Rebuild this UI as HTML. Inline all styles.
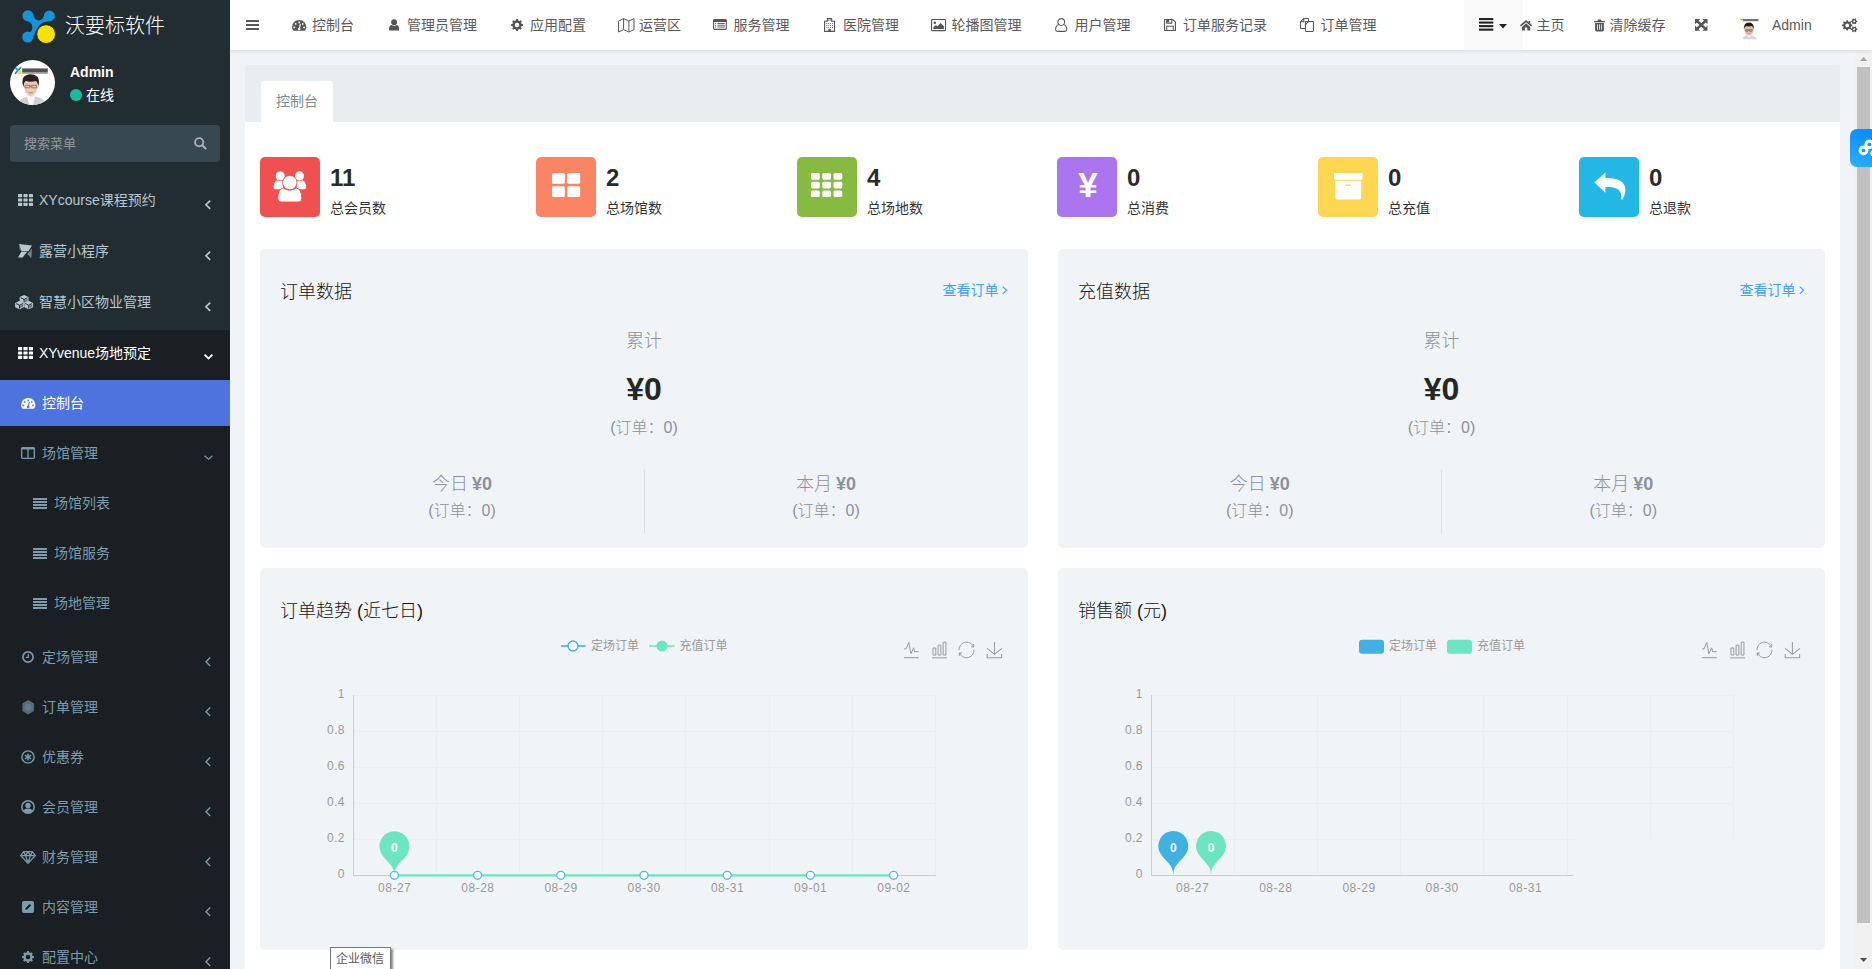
<!DOCTYPE html>
<html lang="zh-CN">
<head>
<meta charset="utf-8">
<title>沃要标软件</title>
<style>
*{box-sizing:border-box;margin:0;padding:0}
html,body{width:1872px;height:969px;overflow:hidden}
body{font-family:"Liberation Sans","Noto Sans CJK SC",sans-serif;font-size:14px;color:#333;background:#f1f4f6;position:relative;-webkit-font-smoothing:antialiased}
.a{position:absolute;white-space:nowrap}
svg{position:absolute;overflow:visible}
#sidebar{position:absolute;left:0;top:0;width:230px;height:969px;background:#222d32;overflow:hidden}
#sidebar .dark{position:absolute;left:0;top:330px;width:230px;height:639px;background:#191f23}
#sidebar .act{position:absolute;left:0;top:380px;width:230px;height:46px;background:#4e73df}
.t{position:absolute;white-space:nowrap;height:20px;line-height:20px;font-size:14px}
.m1{color:#b8c7ce}
.m2{color:#7d9bab}
.w{color:#fff}
#navbar{position:absolute;left:230px;top:0;width:1642px;height:50px;background:#fff;box-shadow:0 1px 4px rgba(0,21,41,.12)}
#navbar .t{color:#595959;top:15px}
.card{position:absolute;background:#f1f4f6;border-radius:5px}
.h{position:absolute;white-space:nowrap;font-size:18px;line-height:26px;height:26px;color:#151515;font-weight:300}
.l{font-weight:300}
b{font-weight:700}
.g{color:#8c919b}
.c{text-align:center}
</style>
</head>
<body>
<div id="main">
<div class="a" style="left:245px;top:65px;width:1595px;height:57px;background:#e8edf0;border-radius:3px 3px 0 0"></div>
<div class="a" style="left:245px;top:122px;width:1595px;height:847px;background:#fff"></div>
<div class="a" style="left:261px;top:81px;width:72px;height:41px;background:#fff;border-radius:3px 3px 0 0"></div>
<div class="a" style="left:276px;top:91px;font-size:14px;line-height:20px;color:#7b8a8b">控制台</div>
<div class="a" style="left:260px;top:157px;width:60px;height:60px;border-radius:5px;background:#f05050"></div><svg style="left:274px;top:170.5px" width="32.5" height="31" viewBox="0 0 32.5 31"><circle cx="6.2" cy="4.9" r="4.6" fill="#fff"/><circle cx="25.5" cy="4.9" r="4.6" fill="#fff"/><path d="M-.4,16.4 Q-.4,9.8 3.6,9.4 Q6.2,10.8 9,9.8 V18.2 H1.4 Q-.4,18.2 -.4,16.4Z" fill="#fff"/><path d="M32.1,16.4 Q32.1,9.8 28.1,9.4 Q25.5,10.8 22.7,9.8 V18.2 H30.3 Q32.1,18.2 32.1,16.4Z" fill="#fff"/><path d="M3.8,27.4 Q3.8,17.8 9.4,17 Q15.8,21.4 22.2,17 Q27.8,17.8 27.8,27.4 Q27.8,31 24.2,31 H7.4 Q3.8,31 3.8,27.4Z" fill="#fff" stroke="#f05050" stroke-width=".9"/><circle cx="15.8" cy="11.6" r="7.2" fill="#fff" stroke="#f05050" stroke-width=".9"/></svg><div class="a" style="left:330px;top:163px;font-size:24px;font-weight:bold;line-height:30px;color:#2b2b2b">11</div><div class="a" style="left:330px;top:198px;font-size:14px;line-height:20px;color:#333">总会员数</div>
<div class="a" style="left:536px;top:157px;width:60px;height:60px;border-radius:5px;background:#fa8564"></div><svg style="left:551.7px;top:173.1px" width="28.2" height="24.1" viewBox="0 0 28.2 24.1"><rect x="0.00" y="0.00" width="12.85" height="10.80" rx="1.6" fill="#fff"/><rect x="0.00" y="13.30" width="12.85" height="10.80" rx="1.6" fill="#fff"/><rect x="15.35" y="0.00" width="12.85" height="10.80" rx="1.6" fill="#fff"/><rect x="15.35" y="13.30" width="12.85" height="10.80" rx="1.6" fill="#fff"/></svg><div class="a" style="left:606px;top:163px;font-size:24px;font-weight:bold;line-height:30px;color:#2b2b2b">2</div><div class="a" style="left:606px;top:198px;font-size:14px;line-height:20px;color:#333">总场馆数</div>
<div class="a" style="left:797px;top:157px;width:60px;height:60px;border-radius:5px;background:#86ba41"></div><svg style="left:811.3px;top:173.1px" width="31.3" height="24.1" viewBox="0 0 31.3 24.1"><rect x="0.00" y="0.00" width="8.77" height="6.70" rx="1.6" fill="#fff"/><rect x="0.00" y="8.70" width="8.77" height="6.70" rx="1.6" fill="#fff"/><rect x="0.00" y="17.40" width="8.77" height="6.70" rx="1.6" fill="#fff"/><rect x="11.27" y="0.00" width="8.77" height="6.70" rx="1.6" fill="#fff"/><rect x="11.27" y="8.70" width="8.77" height="6.70" rx="1.6" fill="#fff"/><rect x="11.27" y="17.40" width="8.77" height="6.70" rx="1.6" fill="#fff"/><rect x="22.53" y="0.00" width="8.77" height="6.70" rx="1.6" fill="#fff"/><rect x="22.53" y="8.70" width="8.77" height="6.70" rx="1.6" fill="#fff"/><rect x="22.53" y="17.40" width="8.77" height="6.70" rx="1.6" fill="#fff"/></svg><div class="a" style="left:867px;top:163px;font-size:24px;font-weight:bold;line-height:30px;color:#2b2b2b">4</div><div class="a" style="left:867px;top:198px;font-size:14px;line-height:20px;color:#333">总场地数</div>
<div class="a" style="left:1057px;top:157px;width:60px;height:60px;border-radius:5px;background:#ac75f0"></div><div class="a c" style="left:1058px;top:164.5px;width:60px;font-size:35px;font-weight:bold;line-height:40px;color:#fff">¥</div><div class="a" style="left:1127px;top:163px;font-size:24px;font-weight:bold;line-height:30px;color:#2b2b2b">0</div><div class="a" style="left:1127px;top:198px;font-size:14px;line-height:20px;color:#333">总消费</div>
<div class="a" style="left:1318px;top:157px;width:60px;height:60px;border-radius:5px;background:#fdd752"></div><svg style="left:1334px;top:173px" width="28.5" height="26.4" viewBox="0 0 28.5 26.4"><rect x="0" y="0" width="28.5" height="6.7" rx="1" fill="#fff"/><path d="M1.4,7.8 H27.1 V25.2 Q27.1,26.4 25.9,26.4 H2.6 Q1.4,26.4 1.4,25.2Z" fill="#fff"/><rect x="11.2" y="11.4" width="6" height="1.6" rx=".8" fill="#fdd752"/></svg><div class="a" style="left:1388px;top:163px;font-size:24px;font-weight:bold;line-height:30px;color:#2b2b2b">0</div><div class="a" style="left:1388px;top:198px;font-size:14px;line-height:20px;color:#333">总充值</div>
<div class="a" style="left:1579px;top:157px;width:60px;height:60px;border-radius:5px;background:#23b7e5"></div><svg style="left:1593.5px;top:171.5px" width="32" height="28" viewBox="0 0 32 28"><path d="M.4,10.4 L11.4,.4 V6 C22.5,6 31.4,8.5 31.4,18 C31.4,21.5 30,25 28.3,27.8 L27.1,27.5 C28.1,18.5 24.5,14.7 11.4,14.7 V20.7Z" fill="#fff"/></svg><div class="a" style="left:1649px;top:163px;font-size:24px;font-weight:bold;line-height:30px;color:#2b2b2b">0</div><div class="a" style="left:1649px;top:198px;font-size:14px;line-height:20px;color:#333">总退款</div>
<div class="card" style="left:260px;top:249px;width:768px;height:299px"></div>
<div class="h" style="left:280px;top:278.5px">订单数据</div><div class="a" style="left:942.5px;top:280px;font-size:14px;line-height:20px;color:#409eff">查看订单</div><svg style="left:1002px;top:285.8px" width="5.5" height="8.5" viewBox="0 0 5.5 8.5"><path d="M.8,.6 L4.6,4.25 L.8,7.9" fill="none" stroke="#409eff" stroke-width="1.2"/></svg>
<div class="a c g l" style="left:544px;top:328px;width:200px;font-size:18px;line-height:26px">累计</div><div class="a c" style="left:544px;top:369px;width:200px;font-size:32px;font-weight:bold;line-height:40px;color:#262626">¥0</div><div class="a c g l" style="left:544px;top:416px;width:200px;font-size:16px;line-height:24px">(订单：0)</div>
<div class="a" style="left:644px;top:470px;width:1px;height:63px;background:#dcdfe4"></div><div class="a c g l" style="left:362px;top:471px;width:200px;font-size:18px;line-height:26px">今日<b style="margin-left:4px">¥0</b></div><div class="a c g l" style="left:362px;top:499px;width:200px;font-size:16px;line-height:24px">(订单：0)</div>
<div class="a c g l" style="left:726px;top:471px;width:200px;font-size:18px;line-height:26px">本月<b style="margin-left:4px">¥0</b></div><div class="a c g l" style="left:726px;top:499px;width:200px;font-size:16px;line-height:24px">(订单：0)</div>
<div class="card" style="left:1058px;top:249px;width:767px;height:299px"></div>
<div class="h" style="left:1078px;top:278.5px">充值数据</div><div class="a" style="left:1739.5px;top:280px;font-size:14px;line-height:20px;color:#409eff">查看订单</div><svg style="left:1799px;top:285.8px" width="5.5" height="8.5" viewBox="0 0 5.5 8.5"><path d="M.8,.6 L4.6,4.25 L.8,7.9" fill="none" stroke="#409eff" stroke-width="1.2"/></svg>
<div class="a c g l" style="left:1341.5px;top:328px;width:200px;font-size:18px;line-height:26px">累计</div><div class="a c" style="left:1341.5px;top:369px;width:200px;font-size:32px;font-weight:bold;line-height:40px;color:#262626">¥0</div><div class="a c g l" style="left:1341.5px;top:416px;width:200px;font-size:16px;line-height:24px">(订单：0)</div>
<div class="a" style="left:1441px;top:470px;width:1px;height:63px;background:#dcdfe4"></div><div class="a c g l" style="left:1159.75px;top:471px;width:200px;font-size:18px;line-height:26px">今日<b style="margin-left:4px">¥0</b></div><div class="a c g l" style="left:1159.75px;top:499px;width:200px;font-size:16px;line-height:24px">(订单：0)</div>
<div class="a c g l" style="left:1523.25px;top:471px;width:200px;font-size:18px;line-height:26px">本月<b style="margin-left:4px">¥0</b></div><div class="a c g l" style="left:1523.25px;top:499px;width:200px;font-size:16px;line-height:24px">(订单：0)</div>
<div class="card" style="left:260px;top:568px;width:768px;height:381.5px"></div>
<div class="h" style="left:280px;top:598px">订单趋势 (近七日)</div>
<svg style="left:904px;top:642px" width="15" height="16" viewBox="4 6 52 53" preserveAspectRatio="none"><path d="M4.1,28.9h7.1l9.3-22l7.4,38l9.7-19.7l3,12.8h14.9M4.1,58h51.4" fill="none" stroke="#999" stroke-width="1" vector-effect="non-scaling-stroke"/></svg><svg style="left:932px;top:642px" width="15" height="16" viewBox="3 1.5 54 57" preserveAspectRatio="none"><path d="M6.7,22.9h10V48h-10V22.9zM24.9,13h10v35h-10V13zM43.2,2h10v46h-10V2zM3.1,58h53.7" fill="none" stroke="#999" stroke-width="1" vector-effect="non-scaling-stroke"/></svg><svg style="left:959px;top:642px" width="15" height="16" viewBox="2 1.5 56 57.5" preserveAspectRatio="none"><path d="M47,18.9h9.8V8.7M56.3,20.1C52.1,9,40.5,0.6,26.8,2.1C12.6,3.7,1.6,16.2,2.1,30.6M13,41.1H3.1v10.2M3.7,39.9c4.2,11.1,15.8,19.5,29.5,18c14.2-1.6,25.2-14.1,24.7-28.5" fill="none" stroke="#999" stroke-width="1" vector-effect="non-scaling-stroke"/></svg><svg style="left:987px;top:642px" width="15" height="16" viewBox="4 0 51 58.5" preserveAspectRatio="none"><path d="M4.7,22.9L29.3,45.5L54.7,23.4M4.6,43.6L4.6,58L53.8,58L53.8,43.6M29.2,45.1L29.2,0" fill="none" stroke="#999" stroke-width="1" vector-effect="non-scaling-stroke"/></svg>
<svg style="left:0;top:0;font-family:'Liberation Sans','Noto Sans CJK SC',sans-serif" width="1872" height="969" viewBox="0 0 1872 969"><path d="M354,839.5 H936" stroke="#eee" stroke-width="1"/><path d="M354,803.5 H936" stroke="#eee" stroke-width="1"/><path d="M354,767.5 H936" stroke="#eee" stroke-width="1"/><path d="M354,731.5 H936" stroke="#eee" stroke-width="1"/><path d="M354,695.5 H936" stroke="#eee" stroke-width="1"/><path d="M436.5,695 V875" stroke="#eee" stroke-width="1"/><path d="M519.5,695 V875" stroke="#eee" stroke-width="1"/><path d="M602.5,695 V875" stroke="#eee" stroke-width="1"/><path d="M685.5,695 V875" stroke="#eee" stroke-width="1"/><path d="M769.5,695 V875" stroke="#eee" stroke-width="1"/><path d="M852.5,695 V875" stroke="#eee" stroke-width="1"/><path d="M935.5,695 V875" stroke="#eee" stroke-width="1"/><path d="M353.5,695 V876" stroke="#ccc" stroke-width="1"/><path d="M353,875.5 H936" stroke="#ccc" stroke-width="1"/><text x="344.85" y="878" text-anchor="end" font-size="12" letter-spacing=".35" fill="#999">0</text><text x="344.85" y="842" text-anchor="end" font-size="12" letter-spacing=".35" fill="#999">0.2</text><text x="344.85" y="806" text-anchor="end" font-size="12" letter-spacing=".35" fill="#999">0.4</text><text x="344.85" y="770" text-anchor="end" font-size="12" letter-spacing=".35" fill="#999">0.6</text><text x="344.85" y="734" text-anchor="end" font-size="12" letter-spacing=".35" fill="#999">0.8</text><text x="344.85" y="698" text-anchor="end" font-size="12" letter-spacing=".35" fill="#999">1</text><text x="394.7" y="892.2" text-anchor="middle" font-size="12" letter-spacing=".5" fill="#999">08-27</text><text x="477.9" y="892.2" text-anchor="middle" font-size="12" letter-spacing=".5" fill="#999">08-28</text><text x="561.0" y="892.2" text-anchor="middle" font-size="12" letter-spacing=".5" fill="#999">08-29</text><text x="644.2" y="892.2" text-anchor="middle" font-size="12" letter-spacing=".5" fill="#999">08-30</text><text x="727.5" y="892.2" text-anchor="middle" font-size="12" letter-spacing=".5" fill="#999">08-31</text><text x="810.7" y="892.2" text-anchor="middle" font-size="12" letter-spacing=".5" fill="#999">09-01</text><text x="893.9" y="892.2" text-anchor="middle" font-size="12" letter-spacing=".5" fill="#999">09-02</text><path d="M561,646.0 H585.5" stroke="#3fb1e3" stroke-width="1.6"/><circle cx="573" cy="646.0" r="5" fill="#fff" stroke="#3fb1e3" stroke-width="1.4"/><text x="591" y="649.6" font-size="12" fill="#999">定场订单</text><path d="M649,646.0 H674.5" stroke="#6be6c1" stroke-width="1.6"/><circle cx="662" cy="646.0" r="5.6" fill="#6be6c1"/><text x="679.5" y="649.6" font-size="12" fill="#999">充值订单</text><path d="M394.4,875.3 H893.6" stroke="#6be6c1" stroke-width="2.3"/><circle cx="394.40" cy="875.3" r="4" fill="#fff" stroke="#52b8e6" stroke-width="1.35"/><circle cx="477.60" cy="875.3" r="4" fill="#fff" stroke="#52b8e6" stroke-width="1.35"/><circle cx="560.80" cy="875.3" r="4" fill="#fff" stroke="#52b8e6" stroke-width="1.35"/><circle cx="644.00" cy="875.3" r="4" fill="#fff" stroke="#52b8e6" stroke-width="1.35"/><circle cx="727.20" cy="875.3" r="4" fill="#fff" stroke="#52b8e6" stroke-width="1.35"/><circle cx="810.40" cy="875.3" r="4" fill="#fff" stroke="#52b8e6" stroke-width="1.35"/><circle cx="893.60" cy="875.3" r="4" fill="#fff" stroke="#52b8e6" stroke-width="1.35"/><path d="M380.85,852.66 A15.00,15.00 0 1 1 407.95,852.66 C404.10,860.79 394.40,864.30 394.40,874.80 C394.40,864.30 384.70,860.79 380.85,852.66Z" fill="#6be6c1"/><text x="394.40" y="851.83" text-anchor="middle" font-size="12" font-weight="bold" fill="#fff">0</text></svg>
<div class="card" style="left:1058px;top:568px;width:767px;height:381.5px"></div>
<div class="h" style="left:1078px;top:598px">销售额 (元)</div>
<svg style="left:1701.5px;top:642px" width="15" height="16" viewBox="4 6 52 53" preserveAspectRatio="none"><path d="M4.1,28.9h7.1l9.3-22l7.4,38l9.7-19.7l3,12.8h14.9M4.1,58h51.4" fill="none" stroke="#999" stroke-width="1" vector-effect="non-scaling-stroke"/></svg><svg style="left:1729.5px;top:642px" width="15" height="16" viewBox="3 1.5 54 57" preserveAspectRatio="none"><path d="M6.7,22.9h10V48h-10V22.9zM24.9,13h10v35h-10V13zM43.2,2h10v46h-10V2zM3.1,58h53.7" fill="none" stroke="#999" stroke-width="1" vector-effect="non-scaling-stroke"/></svg><svg style="left:1756.5px;top:642px" width="15" height="16" viewBox="2 1.5 56 57.5" preserveAspectRatio="none"><path d="M47,18.9h9.8V8.7M56.3,20.1C52.1,9,40.5,0.6,26.8,2.1C12.6,3.7,1.6,16.2,2.1,30.6M13,41.1H3.1v10.2M3.7,39.9c4.2,11.1,15.8,19.5,29.5,18c14.2-1.6,25.2-14.1,24.7-28.5" fill="none" stroke="#999" stroke-width="1" vector-effect="non-scaling-stroke"/></svg><svg style="left:1784.5px;top:642px" width="15" height="16" viewBox="4 0 51 58.5" preserveAspectRatio="none"><path d="M4.7,22.9L29.3,45.5L54.7,23.4M4.6,43.6L4.6,58L53.8,58L53.8,43.6M29.2,45.1L29.2,0" fill="none" stroke="#999" stroke-width="1" vector-effect="non-scaling-stroke"/></svg>
<svg style="left:0;top:0;font-family:'Liberation Sans','Noto Sans CJK SC',sans-serif" width="1872" height="969" viewBox="0 0 1872 969"><path d="M1152,839.5 H1578" stroke="#eee" stroke-width="1"/><path d="M1152,803.5 H1734" stroke="#eee" stroke-width="1"/><path d="M1152,767.5 H1734" stroke="#eee" stroke-width="1"/><path d="M1152,731.5 H1734" stroke="#eee" stroke-width="1"/><path d="M1152,695.5 H1734" stroke="#eee" stroke-width="1"/><path d="M1234.5,695 V875" stroke="#eee" stroke-width="1"/><path d="M1317.5,695 V875" stroke="#eee" stroke-width="1"/><path d="M1400.5,695 V875" stroke="#eee" stroke-width="1"/><path d="M1483.5,695 V875" stroke="#eee" stroke-width="1"/><path d="M1567.5,695 V875" stroke="#eee" stroke-width="1"/><path d="M1650.5,695 V838" stroke="#eee" stroke-width="1"/><path d="M1733.5,695 V838" stroke="#eee" stroke-width="1"/><path d="M1151.5,695 V876" stroke="#ccc" stroke-width="1"/><path d="M1151,875.5 H1573.5" stroke="#ccc" stroke-width="1"/><text x="1142.85" y="878" text-anchor="end" font-size="12" letter-spacing=".35" fill="#999">0</text><text x="1142.85" y="842" text-anchor="end" font-size="12" letter-spacing=".35" fill="#999">0.2</text><text x="1142.85" y="806" text-anchor="end" font-size="12" letter-spacing=".35" fill="#999">0.4</text><text x="1142.85" y="770" text-anchor="end" font-size="12" letter-spacing=".35" fill="#999">0.6</text><text x="1142.85" y="734" text-anchor="end" font-size="12" letter-spacing=".35" fill="#999">0.8</text><text x="1142.85" y="698" text-anchor="end" font-size="12" letter-spacing=".35" fill="#999">1</text><text x="1192.6" y="892.2" text-anchor="middle" font-size="12" letter-spacing=".5" fill="#999">08-27</text><text x="1275.8" y="892.2" text-anchor="middle" font-size="12" letter-spacing=".5" fill="#999">08-28</text><text x="1359.0" y="892.2" text-anchor="middle" font-size="12" letter-spacing=".5" fill="#999">08-29</text><text x="1442.2" y="892.2" text-anchor="middle" font-size="12" letter-spacing=".5" fill="#999">08-30</text><text x="1525.5" y="892.2" text-anchor="middle" font-size="12" letter-spacing=".5" fill="#999">08-31</text><rect x="1359" y="639.7" width="25" height="14" rx="3" fill="#3fb1e3"/><text x="1389" y="650.1" font-size="12" fill="#999">定场订单</text><rect x="1447" y="639.7" width="25" height="14" rx="3" fill="#6be6c1"/><text x="1477" y="650.1" font-size="12" fill="#999">充值订单</text><path d="M1159.75,852.36 A15.00,15.00 0 1 1 1186.85,852.36 C1183.00,860.49 1173.30,864.00 1173.30,874.50 C1173.30,864.00 1163.60,860.49 1159.75,852.36Z" fill="#3fb1e3"/><text x="1173.30" y="851.53" text-anchor="middle" font-size="12" font-weight="bold" fill="#fff">0</text><path d="M1197.45,852.36 A15.00,15.00 0 1 1 1224.55,852.36 C1220.70,860.49 1211.00,864.00 1211.00,874.50 C1211.00,864.00 1201.30,860.49 1197.45,852.36Z" fill="#6be6c1"/><text x="1211.00" y="851.53" text-anchor="middle" font-size="12" font-weight="bold" fill="#fff">0</text></svg>
</div>
<div class="a" style="left:1855px;top:50px;width:17px;height:919px;background:#f1f1f1"></div><div class="a" style="left:1857px;top:67px;width:13px;height:856px;background:#c1c1c1"></div><svg style="left:1860px;top:56.9px" width="7.2" height="4.1" viewBox="0 0 7.2 4.1"><path d="M0,4.1 L3.6,0 L7.2,4.1Z" fill="#a3a3a3"/></svg><svg style="left:1860px;top:957.6px" width="7.2" height="4.1" viewBox="0 0 7.2 4.1"><path d="M0,0 L3.6,4.1 L7.2,0Z" fill="#505050"/></svg>
<div id="navbar">
<div class="a" style="left:1234px;top:0;width:59px;height:50px;background:#f9f9f9"></div>
<svg style="left:16px;top:20.2px" width="13" height="10" viewBox="0 0 13 10"><rect x="0" y="0.00" width="13" height="1.9" rx=".3" fill="#555"/><rect x="0" y="4.05" width="13" height="1.9" rx=".3" fill="#555"/><rect x="0" y="8.10" width="13" height="1.9" rx=".3" fill="#555"/></svg>
<svg style="left:61.8px;top:20.1px" width="14.4" height="10.8" viewBox="0 0 14.4 10.8"><path d="M1.5,10.8 Q0,8.8 0,7.2 A7.2,7.2 0 0 1 14.4,7.2 Q14.4,8.8 12.9,10.8Z" fill="#555"/><circle cx="2.3" cy="7.4" r=".95" fill="#fff"/><circle cx="3.7" cy="3.9" r=".95" fill="#fff"/><circle cx="7.2" cy="2.4" r=".95" fill="#fff"/><circle cx="10.7" cy="3.9" r=".95" fill="#fff"/><circle cx="12.1" cy="7.4" r=".95" fill="#fff"/><path d="M7.2,8.8 L8.3,4.4" stroke="#fff" stroke-width="1.1" stroke-linecap="round"/><circle cx="7.2" cy="9" r="1.35" fill="#fff"/></svg><div class="t" style="left:82px">控制台</div>
<svg style="left:159px;top:19px" width="10.2" height="11.8" viewBox="0 0 10 11.2"><circle cx="5" cy="2.9" r="2.9" fill="#555"/><path d="M0,10 Q0,6 2.4,5.6 Q5,7.2 7.6,5.6 Q10,6 10,10 Q10,11.2 8.6,11.2 H1.4 Q0,11.2 0,10Z" fill="#555"/></svg><div class="t" style="left:177px">管理员管理</div>
<svg style="left:280.9px;top:18.9px" width="12" height="12" viewBox="0 0 12 12"><path d="M11.93,5.06 L11.93,6.94 L10.64,7.00 L9.99,8.58 L10.85,9.53 L9.53,10.85 L8.58,9.99 L7.00,10.64 L6.94,11.93 L5.06,11.93 L5.00,10.64 L3.42,9.99 L2.47,10.85 L1.15,9.53 L2.01,8.58 L1.36,7.00 L0.07,6.94 L0.07,5.06 L1.36,5.00 L2.01,3.42 L1.15,2.47 L2.47,1.15 L3.42,2.01 L5.00,1.36 L5.06,0.07 L6.94,0.07 L7.00,1.36 L8.58,2.01 L9.53,1.15 L10.85,2.47 L9.99,3.42 L10.64,5.00Z M3.75,6.00 a2.25,2.25 0 1 0 4.50,0 a2.25,2.25 0 1 0 -4.50,0Z" fill="#555" fill-rule="evenodd"/></svg><div class="t" style="left:300px">应用配置</div>
<svg style="left:387.5px;top:17.5px" width="16.6" height="14.6" viewBox="0 0 16.6 14.6"><path d="M.55,3.2 L5.6,.6 L10.9,3 L16,.6 V11.6 L10.9,14 L5.6,11.6 L.55,14Z M5.6,.6 V11.6 M10.9,3 V14" fill="none" stroke="#555" stroke-width="1" stroke-linejoin="round"/></svg><div class="t" style="left:409px">运营区</div>
<svg style="left:483.3px;top:19px" width="13.9" height="10.9" viewBox="0 0 13.9 10.9"><rect x=".55" y=".55" width="12.8" height="9.8" rx="1" fill="none" stroke="#555" stroke-width="1.1"/><rect x=".55" y=".55" width="12.8" height="2.5" fill="#555"/><path d="M2,4.5 H3.2 M4.4,4.5 H11.9" stroke="#555" stroke-width=".9"/><path d="M2,6.3 H3.2 M4.4,6.3 H11.9" stroke="#555" stroke-width=".9"/><path d="M2,8.1 H3.2 M4.4,8.1 H11.9" stroke="#555" stroke-width=".9"/></svg><div class="t" style="left:503.5px">服务管理</div>
<svg style="left:594px;top:17.8px" width="11.1" height="14" viewBox="0 0 11.1 14"><path d="M.55,13.4 V3.3 H3.4 V.55 H7.7 V3.3 H10.5 V13.4Z" fill="none" stroke="#555" stroke-width="1.05"/><rect x="2.3" y="5" width=".9" height=".9" fill="#555"/><rect x="4.2" y="5" width=".9" height=".9" fill="#555"/><rect x="6.1" y="5" width=".9" height=".9" fill="#555"/><rect x="8" y="5" width=".9" height=".9" fill="#555"/><rect x="2.3" y="7" width=".9" height=".9" fill="#555"/><rect x="4.2" y="7" width=".9" height=".9" fill="#555"/><rect x="6.1" y="7" width=".9" height=".9" fill="#555"/><rect x="8" y="7" width=".9" height=".9" fill="#555"/><rect x="2.3" y="9" width=".9" height=".9" fill="#555"/><rect x="4.2" y="9" width=".9" height=".9" fill="#555"/><rect x="6.1" y="9" width=".9" height=".9" fill="#555"/><rect x="8" y="9" width=".9" height=".9" fill="#555"/><rect x="4.3" y="11" width="2.5" height="2.2" fill="#555"/><path d="M4.7,1.2 V2.9 M6.4,1.2 V2.9 M4.7,2.05 H6.4" stroke="#555" stroke-width=".6"/></svg><div class="t" style="left:613px">医院管理</div>
<svg style="left:700.8px;top:18.8px" width="15.1" height="12.2" viewBox="0 0 15.1 12.2"><rect x=".55" y=".55" width="14" height="11.1" rx=".8" fill="none" stroke="#555" stroke-width="1.1"/><circle cx="3.8" cy="3.8" r="1.25" fill="#555"/><path d="M2.2,9.9 V8.6 L4.9,6 L6.4,7.4 L9.7,4 L12.9,7.2 V9.9Z" fill="#555"/></svg><div class="t" style="left:721.5px">轮播图管理</div>
<svg style="left:825px;top:17.8px" width="12.4" height="14" viewBox="0 0 12.4 14"><circle cx="6.2" cy="4" r="3.4" fill="none" stroke="#555" stroke-width="1.05"/><path d="M3.9,6.6 Q.6,7.6 .6,11.6 Q.6,13.4 2.6,13.4 H9.8 Q11.8,13.4 11.8,11.6 Q11.8,7.6 8.5,6.6" fill="none" stroke="#555" stroke-width="1.05"/></svg><div class="t" style="left:844.5px">用户管理</div>
<svg style="left:934px;top:19px" width="12" height="12" viewBox="0 0 12 12"><path d="M.55,.55 H8.9 L11.45,3.1 V11.45 H.55Z" fill="none" stroke="#555" stroke-width="1.1" stroke-linejoin="round"/><path d="M2.7,.6 V4.1 H7.8 V.6 M2.7,11.4 V7.2 H9.3 V11.4" fill="none" stroke="#555" stroke-width="1.05"/><rect x="3" y=".8" width="2.2" height="2.2" fill="#555"/></svg><div class="t" style="left:953px">订单服务记录</div>
<svg style="left:1070.1px;top:17.9px" width="14" height="14" viewBox="0 0 14 14"><path d="M5.4,3.5 H12.8 Q13.4,3.5 13.4,4.1 V12.8 Q13.4,13.4 12.8,13.4 H6 Q5.4,13.4 5.4,12.8Z M5.4,10.4 H1.1 Q.55,10.4 .55,9.9 V3.6 L3.6,.55 H8 Q8.6,.55 8.6,1.1 V3.4 M.8,3.8 H3.8 V.8 M5.5,6.6 L8.5,3.6" fill="none" stroke="#555" stroke-width="1.05" stroke-linejoin="round"/></svg><div class="t" style="left:1090.5px">订单管理</div>
<svg style="left:1248.6px;top:18.1px" width="14.3" height="12.7" viewBox="0 0 14.3 12.7"><rect x="0" y="0.00" width="14.3" height="2.1" fill="#222"/><rect x="0" y="3.53" width="14.3" height="2.1" fill="#222"/><rect x="0" y="7.07" width="14.3" height="2.1" fill="#222"/><rect x="0" y="10.60" width="14.3" height="2.1" fill="#222"/></svg><svg style="left:1269px;top:23.7px" width="8" height="4.4" viewBox="0 0 8 4.4"><path d="M0,0 H8 L4,4.4Z" fill="#222"/></svg>
<svg style="left:1289.8px;top:19.6px" width="12.2" height="10.5" viewBox="0 0 12.2 10.5"><path d="M.5,5.9 L6.1,1.1 L11.7,5.9" fill="none" stroke="#555" stroke-width="1.7" stroke-linejoin="miter"/><path d="M8.6,.9 H10.2 V3.6 L8.6,2.4Z" fill="#555"/><path d="M6.1,3.3 L10.3,6.9 V10.5 H7.3 V7.6 H4.9 V10.5 H1.9 V6.9Z" fill="#555"/></svg><div class="t" style="left:1306.5px">主页</div>
<svg style="left:1364.2px;top:18.5px" width="11" height="12.4" viewBox="0 0 11 12.4"><path d="M0,2 H3.4 L4,.4 H7 L7.6,2 H11 V3.3 H0Z" fill="#555"/><path d="M1.1,3.9 H9.9 V11 Q9.9,12.4 8.5,12.4 H2.5 Q1.1,12.4 1.1,11Z" fill="#555"/><path d="M3.5,5.3 V10.8 M5.5,5.3 V10.8 M7.5,5.3 V10.8" stroke="#fff" stroke-width=".8"/></svg><div class="t" style="left:1379.5px">清除缓存</div>
<svg style="left:1465.2px;top:18.8px" width="12.5" height="11.8" viewBox="0 0 12.5 11.8"><path d="M2,2 L10.5,9.8 M10.5,2 L2,9.8" stroke="#555" stroke-width="2.5"/><path d="M0,0 H5.2 L0,5.2Z M12.5,0 H7.3 L12.5,5.2Z M0,11.8 H5.2 L0,6.6Z M12.5,11.8 H7.3 L12.5,6.6Z" fill="#555"/></svg>
<svg style="left:1506.5px;top:12.5px" width="25" height="25" viewBox="0 0 25 25">
<rect x="6" y="6" width="15.5" height="2.2" fill="#444" opacity=".75"/><path d="M3.4,5.6 L4.7,7.2 L6,5.6" stroke="#1296db" stroke-width=".9" fill="none"/><circle cx="5.4" cy="8" r=".8" fill="#fae100"/>
<path d="M5.8,26.2 Q6,23.2 9.6,22.2 L11.9,24.6 L14.2,22.2 Q18,23.2 20.4,26.2Z" fill="#d6d6da"/>
<path d="M10,21 L11.9,24.6 L13.8,21Z" fill="#f4f4f4"/>
<ellipse cx="11.9" cy="17" rx="4.5" ry="5.5" fill="#e4bda5"/>
<path d="M7,16.6 Q6.2,9.6 11.9,9.4 Q17.6,9.6 16.8,16.6 Q16.4,13.6 14.6,13 Q11.6,13.8 9.2,13 Q7.4,13.8 7,16.6Z" fill="#211c1a"/>
<path d="M8.6,16.6 H11.2 V18.2 H8.6Z M12.6,16.6 H15.2 V18.2 H12.6Z M11.2,17.2 H12.6" fill="none" stroke="#4a3d38" stroke-width=".5"/>
<path d="M10.6,20.4 Q11.9,21 13.2,20.4" stroke="#b5655a" stroke-width=".5" fill="none"/>
</svg>
<div class="t" style="left:1542px">Admin</div>
<svg style="left:1612px;top:18px" width="15.4" height="14.6" viewBox="0 0 15.4 14.6"><path d="M10.34,6.59 L10.34,8.21 L9.21,8.26 L8.64,9.62 L9.41,10.46 L8.26,11.61 L7.42,10.84 L6.06,11.41 L6.01,12.54 L4.39,12.54 L4.34,11.41 L2.98,10.84 L2.14,11.61 L0.99,10.46 L1.76,9.62 L1.19,8.26 L0.06,8.21 L0.06,6.59 L1.19,6.54 L1.76,5.18 L0.99,4.34 L2.14,3.19 L2.98,3.96 L4.34,3.39 L4.39,2.26 L6.01,2.26 L6.06,3.39 L7.42,3.96 L8.26,3.19 L9.41,4.34 L8.64,5.18 L9.21,6.54Z M3.30,7.40 a1.90,1.90 0 1 0 3.80,0 a1.90,1.90 0 1 0 -3.80,0Z" fill="#555" fill-rule="evenodd"/><path d="M15.33,2.63 L15.33,3.97 L14.50,3.97 L13.93,4.96 L14.34,5.68 L13.19,6.34 L12.77,5.63 L11.63,5.63 L11.21,6.34 L10.06,5.68 L10.47,4.96 L9.90,3.97 L9.07,3.97 L9.07,2.63 L9.90,2.63 L10.47,1.64 L10.06,0.92 L11.21,0.26 L11.63,0.97 L12.77,0.97 L13.19,0.26 L14.34,0.92 L13.93,1.64 L14.50,2.63Z M11.20,3.30 a1.00,1.00 0 1 0 2.00,0 a1.00,1.00 0 1 0 -2.00,0Z" fill="#555" fill-rule="evenodd"/><path d="M15.33,10.63 L15.33,11.97 L14.50,11.97 L13.93,12.96 L14.34,13.68 L13.19,14.34 L12.77,13.63 L11.63,13.63 L11.21,14.34 L10.06,13.68 L10.47,12.96 L9.90,11.97 L9.07,11.97 L9.07,10.63 L9.90,10.63 L10.47,9.64 L10.06,8.92 L11.21,8.26 L11.63,8.97 L12.77,8.97 L13.19,8.26 L14.34,8.92 L13.93,9.64 L14.50,10.63Z M11.20,11.30 a1.00,1.00 0 1 0 2.00,0 a1.00,1.00 0 1 0 -2.00,0Z" fill="#555" fill-rule="evenodd"/></svg>
</div>
<div id="sidebar">
<div class="dark"></div><div class="act"></div>
<svg style="left:22px;top:10px" width="33" height="33" viewBox="0 0 33 33">
<path d="M10.9,3.6 Q11.8,10.2 16.6,10.4 Q21.4,10.2 22.3,4 L27.4,5.9 L26.5,11.2 Q19.5,11.6 16.6,16.2 Q13,21 11.2,27 L5.7,27 L8.2,22.2 Q10.3,21 10.3,16.4 Q10,11.6 4.2,10.9 L5.9,5.7Z" fill="#1296db"/>
<circle cx="5.9" cy="5.7" r="5.45" fill="#1296db"/><circle cx="27.4" cy="5.9" r="5.45" fill="#1296db"/><circle cx="5.7" cy="27" r="5.5" fill="#1296db"/>
<circle cx="24.1" cy="24.1" r="9.4" fill="#fae100" stroke="#222d32" stroke-width="1"/></svg>
<div class="a w" style="left:65px;top:11px;font-size:20px;line-height:30px;height:30px;font-weight:300">沃要标软件</div>
<div class="a" style="left:10px;top:60px;width:45px;height:45px;border-radius:50%;background:#fff;overflow:hidden">
<svg style="left:0;top:0" width="45" height="45" viewBox="0 0 45 45">
<path d="M5.4,7.6 L8,10.4 L10.6,7.6 M8,10.4 L5.4,13.4" stroke="#1296db" stroke-width="1.7" stroke-linecap="round" fill="none"/><circle cx="9.6" cy="12.2" r="1.9" fill="#fae100"/>
<rect x="12.2" y="8.4" width="25.6" height="4.2" fill="#333" opacity=".85"/><rect x="12.2" y="13.2" width="25.6" height=".7" fill="#888"/>
<path d="M7.6,45 Q9.4,38.6 16.6,36.8 L21,40.6 L25.4,36.6 Q34.4,38.4 37.6,45Z" fill="#cfcfd4"/>
<path d="M16.8,36.4 L19.4,45 H23 L25.2,36.4 L21,33Z" fill="#f6f6f6"/>
<path d="M13.8,23 Q13.2,33.4 20.8,36.8 Q28,33.4 28.2,23 Q27.4,19 20.8,19 Q14.6,19 13.8,23Z" fill="#e9c6b0"/>
<path d="M13.4,27 Q10.4,17.4 16.2,15.2 Q22.4,13 27.2,16.6 Q30,19.6 28.4,27 Q28,22.4 26,21 Q19.6,22.6 15.6,20.8 Q13.6,22.6 13.4,27Z" fill="#2a211d"/>
<path d="M15,25.4 H19.8 V27.8 H15Z M21.8,25.4 H26.6 V27.8 H21.8Z M19.8,26.2 H21.8" fill="none" stroke="#5a4a42" stroke-width=".6"/>
<path d="M18.8,32.6 Q20.8,33.4 22.8,32.6" stroke="#b9695e" stroke-width=".8" fill="none"/>
</svg></div>
<div class="a w" style="left:70px;top:62px;font-size:14px;font-weight:bold;line-height:20px">Admin</div>
<div class="a" style="left:70px;top:89px;width:12px;height:12px;border-radius:50%;background:#18bc9c"></div>
<div class="a w" style="left:86px;top:85px;font-size:14px;line-height:20px">在线</div>
<div class="a" style="left:10px;top:125px;width:210px;height:37px;border-radius:4px;background:#374850"></div>
<div class="a" style="left:24px;top:133.5px;font-size:13px;line-height:20px;color:#999">搜索菜单</div>
<svg style="left:194px;top:137px" width="12.5" height="12.5" viewBox="0 0 12.5 12.5"><circle cx="5.2" cy="5.2" r="4.1" fill="none" stroke="#a9b1b5" stroke-width="1.9"/><path d="M8.2,8.2 L11.6,11.6" stroke="#a9b1b5" stroke-width="2.1" stroke-linecap="round"/></svg>
<svg style="left:17.5px;top:194px" width="15" height="12" viewBox="0 0 15 12"><rect x="0.00" y="0.00" width="4.13" height="3.20" rx="0.5" fill="#b8c7ce"/><rect x="0.00" y="4.40" width="4.13" height="3.20" rx="0.5" fill="#b8c7ce"/><rect x="0.00" y="8.80" width="4.13" height="3.20" rx="0.5" fill="#b8c7ce"/><rect x="5.43" y="0.00" width="4.13" height="3.20" rx="0.5" fill="#b8c7ce"/><rect x="5.43" y="4.40" width="4.13" height="3.20" rx="0.5" fill="#b8c7ce"/><rect x="5.43" y="8.80" width="4.13" height="3.20" rx="0.5" fill="#b8c7ce"/><rect x="10.87" y="0.00" width="4.13" height="3.20" rx="0.5" fill="#b8c7ce"/><rect x="10.87" y="4.40" width="4.13" height="3.20" rx="0.5" fill="#b8c7ce"/><rect x="10.87" y="8.80" width="4.13" height="3.20" rx="0.5" fill="#b8c7ce"/></svg><div class="t m1" style="left:39px;top:189.8px">XYcourse课程预约</div><svg style="left:204.5px;top:200px" width="6" height="9.5" viewBox="0 0 6 9.5"><path d="M5.2,.6 L1,4.75 L5.2,8.9" fill="none" stroke="#b8c7ce" stroke-width="1.7"/></svg>
<svg style="left:17.9px;top:243.8px" width="14" height="14.2" viewBox="0 0 14 14.2"><g fill="#b8c7ce"><path d="M1,0 L14,1.5 L10.4,7.3 L3.6,7.3Z"/><path d="M3.3,7.7 L9.2,7.7 L4.6,13.5 L0,13.5Z"/><path d="M13.9,4.2 L13.3,14.2 L9.2,9.8 L11.8,7.6Z" opacity=".6"/><path d="M1,0.4 L3.4,7 L1.6,5.4Z" opacity=".6"/></g></svg><div class="t m1" style="left:39px;top:241px">露营小程序</div><svg style="left:204.5px;top:251px" width="6" height="9.5" viewBox="0 0 6 9.5"><path d="M5.2,.6 L1,4.75 L5.2,8.9" fill="none" stroke="#b8c7ce" stroke-width="1.7"/></svg>
<svg style="left:15.3px;top:294.8px" width="18.2" height="14.3" viewBox="0 0 18.2 14.3"><path d="M9.10,0.00 L13.50,2.12 L13.50,6.38 L9.10,8.50 L4.70,6.38 L4.70,2.12Z" fill="#b8c7ce"/><path d="M5.70,2.73 L9.10,4.45 L12.50,2.73 M9.10,4.45 L9.10,7.60" stroke="#222d32" stroke-width="1" fill="none"/><path d="M9.80,5.15 L12.60,3.52 L12.60,5.88 L9.80,7.20Z" fill="#222d32" opacity=".55"/><path d="M4.50,5.80 L8.90,7.93 L8.90,12.18 L4.50,14.30 L0.10,12.18 L0.10,7.93Z" fill="#b8c7ce"/><path d="M1.10,8.53 L4.50,10.25 L7.90,8.53 M4.50,10.25 L4.50,13.40" stroke="#222d32" stroke-width="1" fill="none"/><path d="M5.20,10.95 L8.00,9.33 L8.00,11.68 L5.20,13.00Z" fill="#222d32" opacity=".55"/><path d="M13.70,5.80 L18.10,7.93 L18.10,12.18 L13.70,14.30 L9.30,12.18 L9.30,7.93Z" fill="#b8c7ce"/><path d="M10.30,8.53 L13.70,10.25 L17.10,8.53 M13.70,10.25 L13.70,13.40" stroke="#222d32" stroke-width="1" fill="none"/><path d="M14.40,10.95 L17.20,9.33 L17.20,11.68 L14.40,13.00Z" fill="#222d32" opacity=".55"/></svg><div class="t m1" style="left:39px;top:292px">智慧小区物业管理</div><svg style="left:204.5px;top:302px" width="6" height="9.5" viewBox="0 0 6 9.5"><path d="M5.2,.6 L1,4.75 L5.2,8.9" fill="none" stroke="#b8c7ce" stroke-width="1.7"/></svg>
<svg style="left:17.5px;top:347px" width="15" height="12" viewBox="0 0 15 12"><rect x="0.00" y="0.00" width="4.13" height="3.20" rx="0.5" fill="#fff"/><rect x="0.00" y="4.40" width="4.13" height="3.20" rx="0.5" fill="#fff"/><rect x="0.00" y="8.80" width="4.13" height="3.20" rx="0.5" fill="#fff"/><rect x="5.43" y="0.00" width="4.13" height="3.20" rx="0.5" fill="#fff"/><rect x="5.43" y="4.40" width="4.13" height="3.20" rx="0.5" fill="#fff"/><rect x="5.43" y="8.80" width="4.13" height="3.20" rx="0.5" fill="#fff"/><rect x="10.87" y="0.00" width="4.13" height="3.20" rx="0.5" fill="#fff"/><rect x="10.87" y="4.40" width="4.13" height="3.20" rx="0.5" fill="#fff"/><rect x="10.87" y="8.80" width="4.13" height="3.20" rx="0.5" fill="#fff"/></svg><div class="t w" style="left:39px;top:343px">XYvenue场地预定</div><svg style="left:204px;top:354px" width="9" height="5.5" viewBox="0 0 9 5.5"><path d="M.6,.7 L4.5,4.6 L8.4,.7" fill="none" stroke="#fff" stroke-width="1.8"/></svg>
<svg style="left:20.8px;top:398px" width="14.4" height="10.8" viewBox="0 0 14.4 10.8"><path d="M1.5,10.8 Q0,8.8 0,7.2 A7.2,7.2 0 0 1 14.4,7.2 Q14.4,8.8 12.9,10.8Z" fill="#fff"/><circle cx="2.3" cy="7.4" r=".95" fill="#4e73df"/><circle cx="3.7" cy="3.9" r=".95" fill="#4e73df"/><circle cx="7.2" cy="2.4" r=".95" fill="#4e73df"/><circle cx="10.7" cy="3.9" r=".95" fill="#4e73df"/><circle cx="12.1" cy="7.4" r=".95" fill="#4e73df"/><path d="M7.2,8.8 L8.3,4.4" stroke="#4e73df" stroke-width="1.1" stroke-linecap="round"/><circle cx="7.2" cy="9" r="1.35" fill="#4e73df"/></svg><div class="t w" style="left:42px;top:393px">控制台</div>
<svg style="left:21px;top:447px" width="14" height="12" viewBox="0 0 14 12"><rect x=".65" y=".65" width="12.7" height="10.7" rx="1" fill="none" stroke="#7d9bab" stroke-width="1.3"/><rect x=".65" y=".65" width="12.7" height="1.8" fill="#7d9bab"/><path d="M7,1 V11.5" stroke="#7d9bab" stroke-width="1.3"/></svg><div class="t m2" style="left:42px;top:443px">场馆管理</div><svg style="left:204px;top:455px" width="9" height="5.2" viewBox="0 0 9 5.2"><path d="M.6,.7 L4.5,4.3 L8.4,.7" fill="none" stroke="#7d9bab" stroke-width="1.2"/></svg>
<svg style="left:33px;top:497.5px" width="14" height="11" viewBox="0 0 14 11"><rect x="0" y="0.00" width="14" height="2" fill="#7d9bab"/><rect x="0" y="3.00" width="14" height="2" fill="#7d9bab"/><rect x="0" y="6.00" width="14" height="2" fill="#7d9bab"/><rect x="0" y="9.00" width="14" height="2" fill="#7d9bab"/></svg><div class="t m2" style="left:54px;top:493px">场馆列表</div>
<svg style="left:33px;top:547.5px" width="14" height="11" viewBox="0 0 14 11"><rect x="0" y="0.00" width="14" height="2" fill="#7d9bab"/><rect x="0" y="3.00" width="14" height="2" fill="#7d9bab"/><rect x="0" y="6.00" width="14" height="2" fill="#7d9bab"/><rect x="0" y="9.00" width="14" height="2" fill="#7d9bab"/></svg><div class="t m2" style="left:54px;top:543px">场馆服务</div>
<svg style="left:33px;top:597.5px" width="14" height="11" viewBox="0 0 14 11"><rect x="0" y="0.00" width="14" height="2" fill="#7d9bab"/><rect x="0" y="3.00" width="14" height="2" fill="#7d9bab"/><rect x="0" y="6.00" width="14" height="2" fill="#7d9bab"/><rect x="0" y="9.00" width="14" height="2" fill="#7d9bab"/></svg><div class="t m2" style="left:54px;top:593px">场地管理</div>
<svg style="left:22px;top:651px" width="12" height="12" viewBox="0 0 12 12"><circle cx="6" cy="6" r="5.1" fill="none" stroke="#7d9bab" stroke-width="1.7"/><path d="M6.3,3 V6.4 H3.8" fill="none" stroke="#7d9bab" stroke-width="1.3"/></svg><div class="t m2" style="left:42px;top:647px">定场管理</div><svg style="left:204.5px;top:656.5px" width="6" height="9.5" viewBox="0 0 6 9.5"><path d="M5.2,.6 L1,4.75 L5.2,8.9" fill="none" stroke="#7d9bab" stroke-width="1.4"/></svg>
<svg style="left:21.8px;top:699.7px" width="12.4" height="14.4" viewBox="0 0 12.4 14.4"><path d="M6.2,0 L12,3.5 L12,10.9 L6.2,14.4 L0.4,10.9 L0.4,3.5Z" fill="#7d9bab" opacity=".62"/><circle cx="6.2" cy="7.2" r="3.4" fill="#7d9bab" opacity=".35"/></svg><div class="t m2" style="left:42px;top:697px">订单管理</div><svg style="left:204.5px;top:706.5px" width="6" height="9.5" viewBox="0 0 6 9.5"><path d="M5.2,.6 L1,4.75 L5.2,8.9" fill="none" stroke="#7d9bab" stroke-width="1.4"/></svg>
<svg style="left:21px;top:750px" width="14" height="14" viewBox="0 0 14 14"><circle cx="7" cy="7" r="6.1" fill="none" stroke="#7d9bab" stroke-width="1.4"/><path d="M7.00,10.60 L7.00,3.40" stroke="#7d9bab" stroke-width="1.5"/><path d="M3.88,8.80 L10.12,5.20" stroke="#7d9bab" stroke-width="1.5"/><path d="M3.88,5.20 L10.12,8.80" stroke="#7d9bab" stroke-width="1.5"/></svg><div class="t m2" style="left:42px;top:747px">优惠券</div><svg style="left:204.5px;top:756.5px" width="6" height="9.5" viewBox="0 0 6 9.5"><path d="M5.2,.6 L1,4.75 L5.2,8.9" fill="none" stroke="#7d9bab" stroke-width="1.4"/></svg>
<svg style="left:21px;top:800px" width="14" height="14" viewBox="0 0 14 14"><circle cx="7" cy="7" r="6.2" fill="none" stroke="#7d9bab" stroke-width="1.5"/><circle cx="7" cy="5.4" r="2.7" fill="#7d9bab"/><path d="M2.6,11.2 Q3.2,8.2 7,8.6 Q10.8,8.2 11.4,11.2 Q9.4,13.2 7,13.2 Q4.6,13.2 2.6,11.2Z" fill="#7d9bab"/></svg><div class="t m2" style="left:42px;top:797px">会员管理</div><svg style="left:204.5px;top:806.5px" width="6" height="9.5" viewBox="0 0 6 9.5"><path d="M5.2,.6 L1,4.75 L5.2,8.9" fill="none" stroke="#7d9bab" stroke-width="1.4"/></svg>
<svg style="left:20px;top:851px" width="16" height="13" viewBox="0 0 16 13"><path d="M3.6,.7 H12.4 L15.3,4.6 L8,12.3 L.7,4.6Z M.7,4.6 H15.3 M5.6,4.6 L8,12 L10.4,4.6 M3.6,.7 L5.6,4.6 L8,.7 L10.4,4.6 L12.4,.7" fill="none" stroke="#7d9bab" stroke-width="1.25" stroke-linejoin="round"/></svg><div class="t m2" style="left:42px;top:847px">财务管理</div><svg style="left:204.5px;top:856.5px" width="6" height="9.5" viewBox="0 0 6 9.5"><path d="M5.2,.6 L1,4.75 L5.2,8.9" fill="none" stroke="#7d9bab" stroke-width="1.4"/></svg>
<svg style="left:22px;top:901px" width="12" height="12" viewBox="0 0 12 12"><rect x="0" y="0" width="12" height="12" rx="2" fill="#7d9bab"/><path d="M3.2,8.8 L3.6,6.9 L7.6,2.9 L9.1,4.4 L5.1,8.4Z" fill="#191f23"/></svg><div class="t m2" style="left:42px;top:897px">内容管理</div><svg style="left:204.5px;top:906.5px" width="6" height="9.5" viewBox="0 0 6 9.5"><path d="M5.2,.6 L1,4.75 L5.2,8.9" fill="none" stroke="#7d9bab" stroke-width="1.4"/></svg>
<svg style="left:22px;top:951px" width="12" height="12" viewBox="0 0 12 12"><path d="M11.93,5.06 L11.93,6.94 L10.64,7.00 L9.99,8.58 L10.85,9.53 L9.53,10.85 L8.58,9.99 L7.00,10.64 L6.94,11.93 L5.06,11.93 L5.00,10.64 L3.42,9.99 L2.47,10.85 L1.15,9.53 L2.01,8.58 L1.36,7.00 L0.07,6.94 L0.07,5.06 L1.36,5.00 L2.01,3.42 L1.15,2.47 L2.47,1.15 L3.42,2.01 L5.00,1.36 L5.06,0.07 L6.94,0.07 L7.00,1.36 L8.58,2.01 L9.53,1.15 L10.85,2.47 L9.99,3.42 L10.64,5.00Z M3.75,6.00 a2.25,2.25 0 1 0 4.50,0 a2.25,2.25 0 1 0 -4.50,0Z" fill="#7d9bab" fill-rule="evenodd"/></svg><div class="t m2" style="left:42px;top:947px">配置中心</div><svg style="left:204.5px;top:956.5px" width="6" height="9.5" viewBox="0 0 6 9.5"><path d="M5.2,.6 L1,4.75 L5.2,8.9" fill="none" stroke="#7d9bab" stroke-width="1.4"/></svg>
</div>
<div class="a" style="left:330px;top:947px;width:61px;height:26px;background:#fff;border:1px solid #767676;box-shadow:2px 2px 2px rgba(0,0,0,.45)"></div><div class="a" style="left:336px;top:949.5px;font-size:12px;line-height:18px;color:#575757">企业微信</div>
<div class="a" style="left:1850px;top:129px;width:30px;height:38px;border-radius:7px;background:linear-gradient(200deg,#0a8fff 20%,#2eb0ff 100%);overflow:hidden"><svg style="left:8px;top:9px" width="22" height="18" viewBox="0 0 22 18"><g fill="none" stroke="#fff" stroke-width="3"><circle cx="5.5" cy="12.4" r="3.4"/><circle cx="11.3" cy="6.4" r="3.4"/><circle cx="15.4" cy="15.4" r="1.6"/></g></svg></div>
</body>
</html>
